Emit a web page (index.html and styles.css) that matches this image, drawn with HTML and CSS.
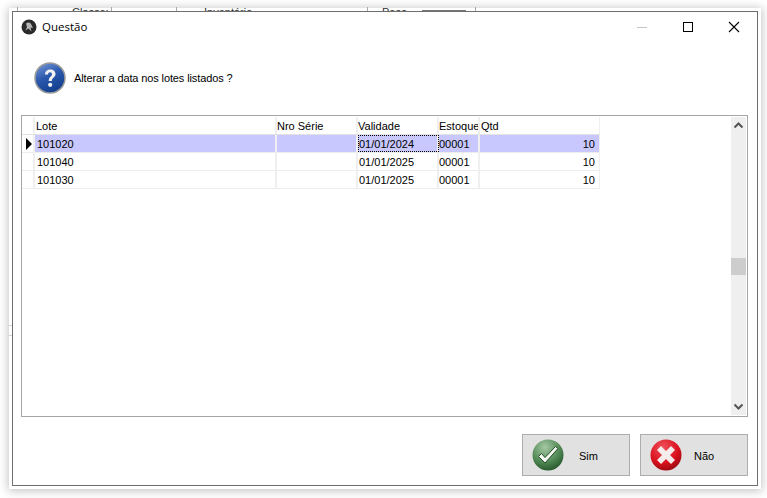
FILE: index.html
```html
<!DOCTYPE html>
<html lang="pt">
<head>
<meta charset="utf-8">
<title>Questão</title>
<link rel="stylesheet" href="styles.css">
</head>
<body>
<div class="window">
  <header class="titlebar">
    <svg class="app-icon" width="16" height="16" viewBox="0 0 16 16"><circle cx="8" cy="8" r="7.500" fill="#2a2a2a"/><path d="M5 4.500C7 2.800 10 3.500 10.500 6L12 9 9.500 8.500 10.500 12.500 7.500 9.500 4.500 11.500 6 8Z" fill="#b5b5b5"/></svg>
    <span class="title">Questão</span>
    <div class="controls">
      <svg class="ctl" width="46" height="14" viewBox="0 0 46 14"><path d="M18 7.500H28" stroke="#c4c4c4"/></svg>
      <svg class="ctl" width="46" height="14" viewBox="0 0 46 14"><rect x="18.500" y="2.500" width="9" height="9" fill="none" stroke="#000"/></svg>
      <svg class="ctl" width="46" height="14" viewBox="0 0 46 14"><path d="M18 2L28 12M28 2L18 12" stroke="#000" stroke-width="1.100"/></svg>
    </div>
  </header>
  <div class="prompt">
    <svg width="32" height="32" viewBox="0 0 32 32">
      <defs><linearGradient id="qb" x1="0.200" y1="0" x2="0.700" y2="1"><stop offset="0" stop-color="#6f93d4"/><stop offset="0.450" stop-color="#2a58ad"/><stop offset="1" stop-color="#123c8a"/></linearGradient></defs>
      <circle cx="16" cy="16" r="15" fill="url(#qb)" stroke="#9a9a9a" stroke-width="1.500"/>
      <path d="M11 12.500C11 9 13.500 7.500 16.200 7.500 19.500 7.500 21.500 9.500 21.500 12 21.500 15.500 17.800 15.500 17.800 19H14.700C14.700 14.800 18 14.600 18 12.300 18 11 17.200 10.300 16 10.300 14.800 10.300 14.100 11.200 14.100 12.500Z" fill="#f2f2f2"/>
      <circle cx="16.200" cy="22.800" r="2.100" fill="#f2f2f2"/>
    </svg>
    <p class="prompt-text">Alterar a data nos lotes listados ?</p>
  </div>
  <div class="grid-box">
    <div class="grid">
      <div class="row head">
        <div class="cell ind"></div><div class="cell lote">Lote</div><div class="cell serie">Nro Série</div><div class="cell val">Validade</div><div class="cell est">Estoque</div><div class="cell qtd">Qtd</div>
      </div>
      <div class="row current">
        <div class="cell ind"><svg width="8" height="12" viewBox="0 0 8 12"><path d="M1 0L7 6 1 12Z" fill="#000"/></svg></div><div class="cell lote">101020</div><div class="cell serie"></div><div class="cell val focus">01/01/2024</div><div class="cell est">00001</div><div class="cell qtd num">10</div>
      </div>
      <div class="row">
        <div class="cell ind"></div><div class="cell lote">101040</div><div class="cell serie"></div><div class="cell val">01/01/2025</div><div class="cell est">00001</div><div class="cell qtd num">10</div>
      </div>
      <div class="row">
        <div class="cell ind"></div><div class="cell lote">101030</div><div class="cell serie"></div><div class="cell val">01/01/2025</div><div class="cell est">00001</div><div class="cell qtd num">10</div>
      </div>
    </div>
    <div class="scrollbar">
      <svg class="arrow" width="15" height="17" viewBox="0 0 15 17"><path d="M3.500 10.500L7.500 6.500 11.500 10.500" fill="none" stroke="#555" stroke-width="2"/></svg>
      <div class="track"><div class="thumb"></div></div>
      <svg class="arrow" width="15" height="17" viewBox="0 0 15 17"><path d="M3.500 6.500L7.500 10.500 11.500 6.500" fill="none" stroke="#555" stroke-width="2"/></svg>
    </div>
  </div>
  <footer class="actions">
    <button class="btn">
      <svg width="32" height="32" viewBox="0 0 32 32">
        <defs><radialGradient id="gb" cx="0.400" cy="0.250" r="0.850"><stop offset="0" stop-color="#a5c9a5"/><stop offset="0.600" stop-color="#4d8450"/><stop offset="1" stop-color="#1d4a24"/></radialGradient></defs>
        <circle cx="16" cy="16" r="15.500" fill="url(#gb)"/>
        <path d="M6.500 17.500L13 24 26 9.500 23.500 7.500 13 18.500 9.500 14.500Z" fill="#f4f8f2" stroke="#234d28" stroke-width="1"/>
      </svg>
      <span class="btn-label">Sim</span>
    </button>
    <button class="btn">
      <svg width="32" height="32" viewBox="0 0 32 32">
        <defs><radialGradient id="rb" cx="0.400" cy="0.250" r="0.850"><stop offset="0" stop-color="#f0505a"/><stop offset="0.600" stop-color="#d8101c"/><stop offset="1" stop-color="#8a0810"/></radialGradient></defs>
        <circle cx="16" cy="16" r="15.500" fill="url(#rb)"/>
        <path d="M7 11L11 7 16 12 21 7 25 11 20 16 25 21 21 25 16 20 11 25 7 21 12 16Z" fill="#f5ecec"/>
      </svg>
      <span class="btn-label">Não</span>
    </button>
  </footer>
</div>
<div class="backdrop">
  <i class="vline v1"></i><i class="vline v2"></i><i class="vline v3"></i><i class="vline v4"></i><i class="vline v5"></i>
  <span class="bg-a">Classe:</span><span class="bg-b">Inventário</span><span class="bg-c">Peso</span><i class="bar"></i>
</div>
<i class="tick t1"></i><i class="tick t2"></i>
</body>
</html>
```
FILE: styles.css
```css
* { box-sizing: border-box; }
html, body { margin: 0; height: 100%; }
body {
  position: relative;
  overflow: hidden;
  background: #fff;
  font-family: "Liberation Sans", Arial, sans-serif;
  font-size: 11px;
  color: #000;
  padding: 11px 9px 0 12px;
}
.backdrop {
  position: absolute;
  left: 0;
  right: 0;
  top: 7px;
  height: 4px;
  overflow: hidden;
  font-size: 11px;
  line-height: 11px;
  color: #333;
}
.backdrop span { position: absolute; top: 0; }
.bg-a { left: 72px; }
.bg-b { left: 204px; }
.bg-c { left: 382px; }
.vline { position: absolute; top: 0; width: 1px; height: 4px; background: #a8a8a8; }
.v1 { left: 17px; }
.v2 { left: 111px; }
.v3 { left: 176px; }
.v4 { left: 367px; }
.v5 { left: 475px; }
.bar { position: absolute; left: 422px; top: 3px; width: 44px; height: 1px; background: #777; }
.tick { position: absolute; left: 9px; width: 3px; height: 1px; background: #d2d2d2; }
.t1 { top: 325px; }
.t2 { top: 335px; }
.window {
  position: relative;
  width: 746px;
  height: 475px;
  background: #fff;
  border: 1px solid #6e6e6e;
  box-shadow: 0 0 0 3px #fff, 0 1px 9px 4px rgba(0,0,0,.24);
  display: flex;
  flex-direction: column;
}
.titlebar {
  display: flex;
  align-items: center;
  height: 29px;
  padding-left: 8px;
  flex: none;
}
.app-icon { flex: none; }
.title {
  margin-left: 5px;
  font-family: "Open Sans", sans-serif;
  font-size: 11.5px;
}
.controls { margin-left: auto; display: flex; }
.ctl { display: block; }
.prompt {
  display: flex;
  align-items: center;
  height: 44px;
  padding-left: 21px;
  margin-top: 15px;
  flex: none;
}
.prompt svg { flex: none; }
.prompt-text { margin: 0 0 0 8px; letter-spacing: -0.12px; }
.grid-box {
  margin: 15px 9px 0 8px;
  height: 302px;
  border: 1px solid #a5a5a5;
  padding: 1px 1px 1px 0;
  display: flex;
  justify-content: space-between;
  flex: none;
}
.grid { width: 578px; }
.row {
  display: flex;
  height: 18px;
  border-bottom: 1px solid #ededed;
}
.head { border-bottom-color: #e2e2e2; }
.cell {
  border-right: 2px solid #efefef;
  padding: 1px 0 0 0;
  line-height: 17px;
  white-space: nowrap;
  overflow: hidden;
}
.ind { width: 13px; padding: 3px 0 0 3px; }
.lote { width: 242px; padding-left: 1px; }
.serie { width: 81px; }
.val { width: 81px; }
.est { width: 41px; }
.qtd { width: 120px; padding-left: 1px; border-right: 1px solid #efefef; }
.row:not(.head) .lote { padding-left: 2px; }
.row:not(.head) .val { padding-left: 1px; }
.num { text-align: right; padding-right: 4px; }
.current .cell:not(.ind) { background: #c8c8ff; }
.current .focus {
  background: #fff;
  outline: 1px dotted #000;
  outline-offset: -1px;
}
.scrollbar {
  width: 15px;
  background: #efefef;
  display: flex;
  flex-direction: column;
  flex: none;
}
.arrow { display: block; flex: none; }
.track { flex: 1; padding-top: 124px; }
.thumb { height: 17px; background: #cdcdcd; }
.actions {
  display: flex;
  justify-content: flex-end;
  gap: 10px;
  padding: 17px 9px 0 0;
}
.btn {
  width: 108px;
  height: 42px;
  border: 1px solid #adadad;
  background: #e1e1e1;
  display: flex;
  align-items: center;
  padding: 0 0 0 9px;
  font: inherit;
  color: #000;
}
.btn svg { flex: none; }
.btn-label { margin: 2px 0 0 15px; }
.btn + .btn .btn-label { margin-left: 12px; }
```
